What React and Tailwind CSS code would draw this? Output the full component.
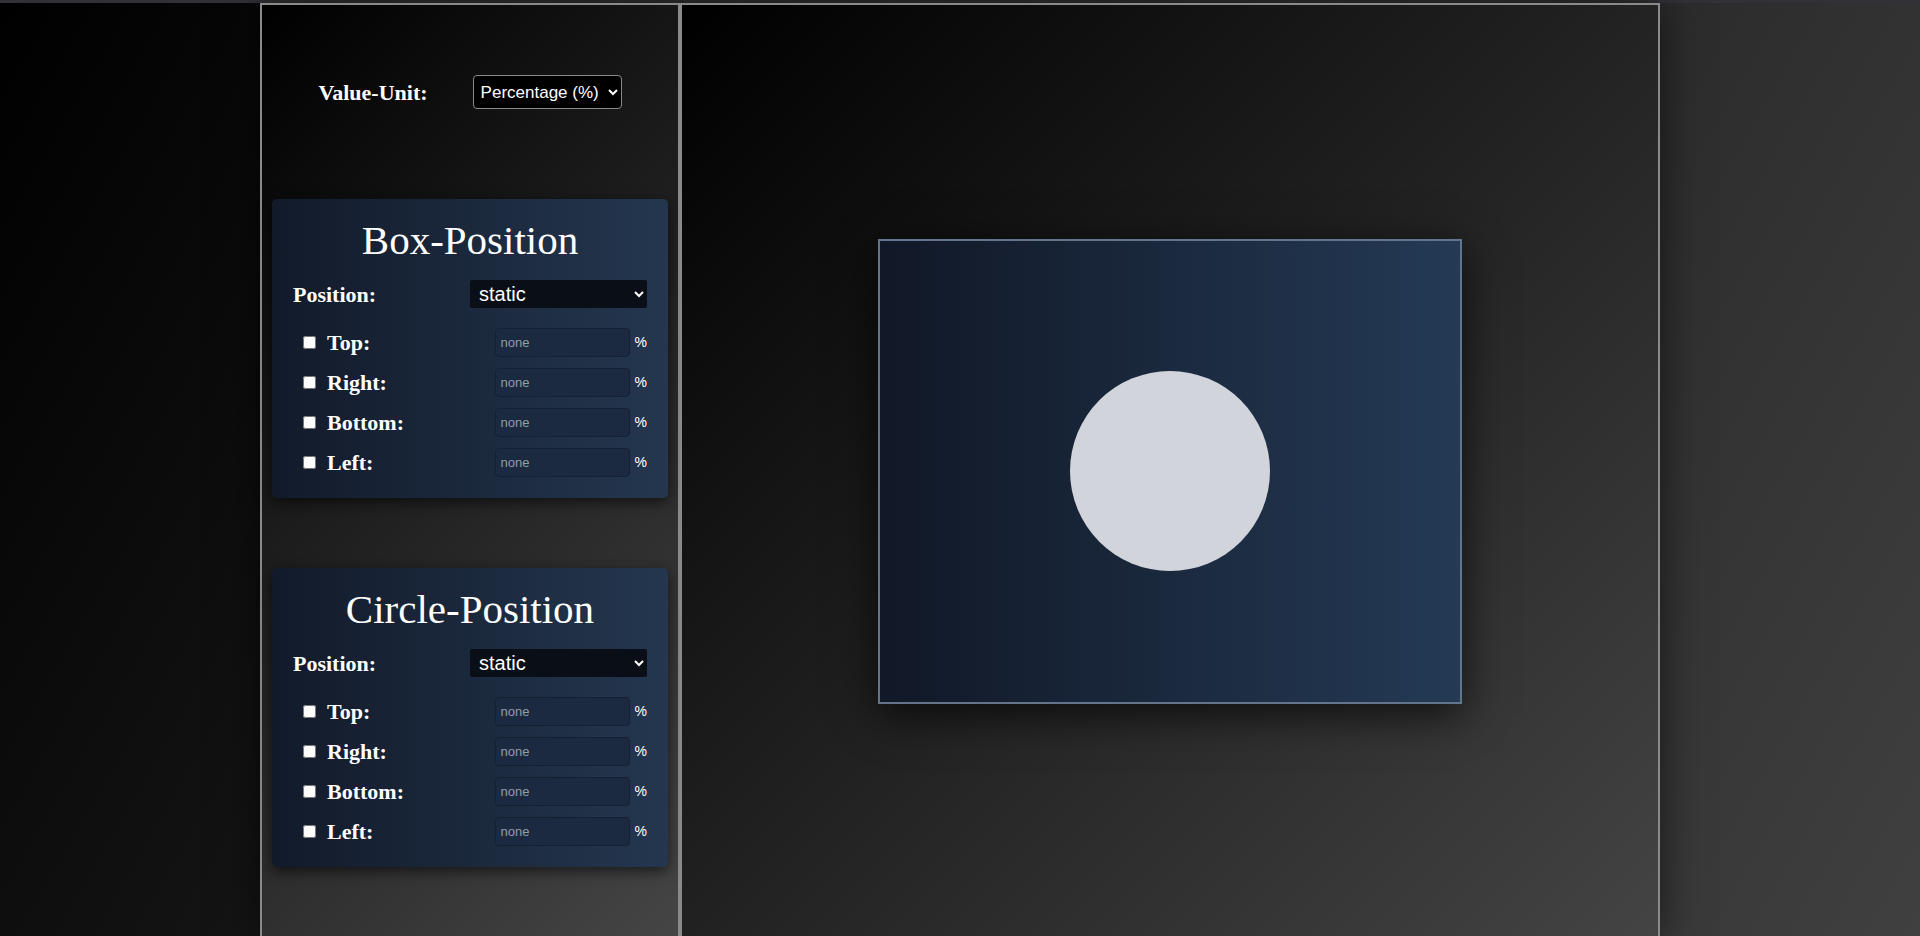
import React, { useState } from 'react';

const sides = ['Top', 'Right', 'Bottom', 'Left'];

function PositionCard({ title }) {
  const [position, setPosition] = useState('static');

  return (
    <div className="mx-[10px] rounded-[5px] bg-[linear-gradient(to_right,#121a2a,#24374f)] px-[21px] pt-[18px] pb-[21px] shadow-[0_4px_14px_rgba(0,0,0,0.6)]">
      <h2 className="text-center font-['Liberation_Serif',serif] text-[41px] leading-[46px] text-white">{title}</h2>
      {/* position select */}
      <div className="mt-[17px] flex h-[28px] items-center justify-between">
        <label className="font-['Liberation_Serif',serif] text-[22px] font-bold text-white">Position:</label>
        <select
          value={position}
          onChange={(e) => setPosition(e.target.value)}
          className="h-[28px] w-[177px] rounded-[2px] bg-[#0a0f17] pl-[5px] font-['Liberation_Sans',Arial,sans-serif] text-[20px] text-white"
        >
          <option>static</option>
          <option>relative</option>
          <option>absolute</option>
          <option>fixed</option>
          <option>sticky</option>
        </select>
      </div>
      {/* offsets */}
      <div className="mt-[20px] flex flex-col gap-[11px]">
        {sides.map((side) => (
          <div key={side} className="flex h-[29px] items-center pl-[10px]">
            <input type="checkbox" className="m-0 h-[13px] w-[13px]" />
            <label className="ml-[11px] flex-1 font-['Liberation_Serif',serif] text-[22px] font-bold text-white">{side}:</label>
            <input
              type="text"
              placeholder="none"
              className="h-[29px] w-[135px] rounded-[4px] border border-[#162033] bg-[#1b2a40] px-[5px] font-['Liberation_Sans',Arial,sans-serif] text-[13px] text-white placeholder:text-[#959ca8]"
            />
            <span className="ml-[5px] font-['Liberation_Sans',Arial,sans-serif] text-[14px] text-white">%</span>
          </div>
        ))}
      </div>
    </div>
  );
}

function App() {
  const [unit, setUnit] = useState('%');

  return (
    <div className="h-screen overflow-hidden bg-[linear-gradient(120deg,#000000,#404040)]">
      <div className="h-[3px] bg-[#323236]"></div>
      <div className="mx-auto flex w-[1400px] shadow-[0_0_40px_rgba(0,0,0,0.6)]">
        {/* controls */}
        <div className="h-[936px] w-[420px] border-2 border-[#8a8a8a] bg-[linear-gradient(135deg,#000000,#454545)] pt-[70px]">
          <div className="flex h-[34px] items-center justify-center gap-[45px]">
            <label className="font-['Liberation_Serif',serif] text-[22px] font-bold text-white">Value-Unit:</label>
            <select
              value={unit}
              onChange={(e) => setUnit(e.target.value)}
              className="h-[34px] w-[149px] rounded-[4px] border border-[#8a8a8a] bg-black pl-[3px] font-['Liberation_Sans',Arial,sans-serif] text-[17px] text-white"
            >
              <option value="%">Percentage (%)</option>
              <option value="px">Pixels (px)</option>
            </select>
          </div>
          <div className="mt-[90px]">
            <PositionCard title="Box-Position" />
          </div>
          <div className="mt-[70px]">
            <PositionCard title="Circle-Position" />
          </div>
        </div>
        {/* preview */}
        <div className="flex h-[936px] w-[980px] items-center justify-center border-2 border-[#8a8a8a] bg-[linear-gradient(135deg,#000000,#444444)]">
          <div className="flex h-[465px] w-[584px] items-center justify-center border-2 border-[#64748b] bg-[linear-gradient(to_right,#111827,#243a55)] shadow-[0_10px_40px_rgba(0,0,0,0.7)]">
            <div className="h-[200px] w-[200px] rounded-full bg-[#d1d5db]"></div>
          </div>
        </div>
      </div>
    </div>
  );
}

export default App;
